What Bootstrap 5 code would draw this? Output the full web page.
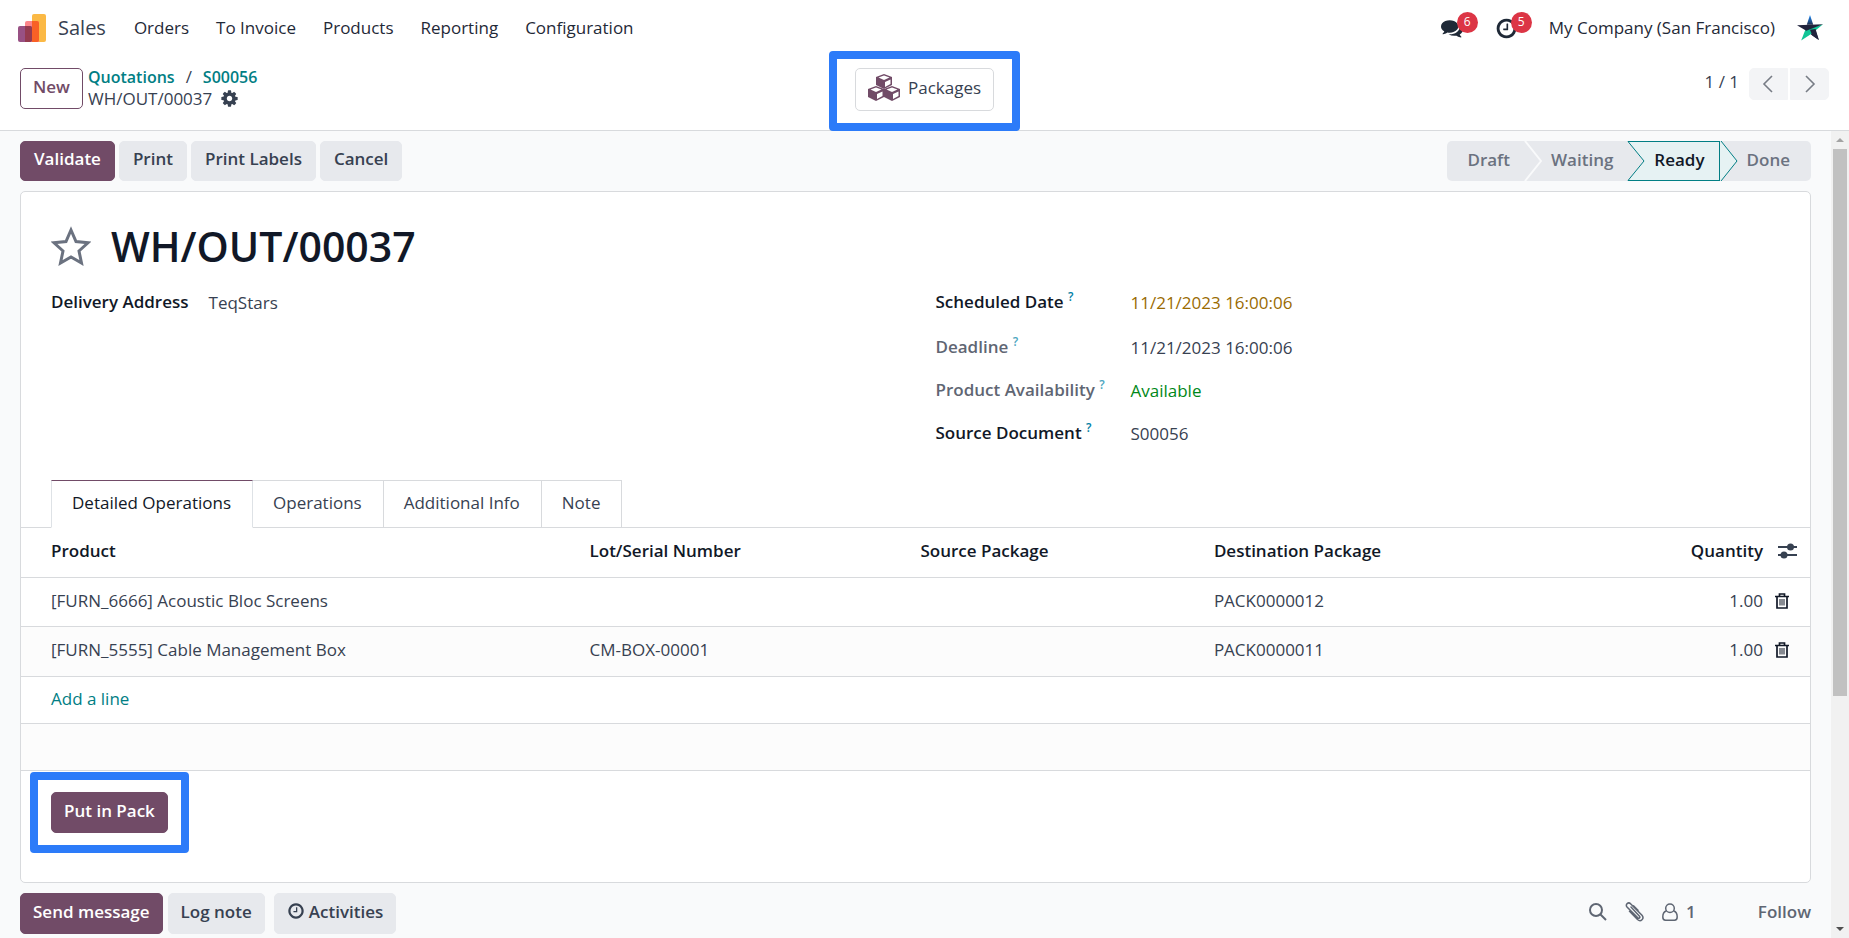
<!DOCTYPE html>
<html lang="en">
<head>
<meta charset="utf-8">
<meta name="viewport" content="width=device-width, initial-scale=1">
<title>WH/OUT/00037 - Sales</title>
<link rel="stylesheet" href="https://cdn.jsdelivr.net/npm/bootstrap@5.3.0/dist/css/bootstrap.min.css">
<style>
:root{--plum:#714b67;--teal:#017e84;--line:#d8dadd;--ink:#111827;--text:#374151;--soft:#e7e9ed;--mark:#2c7bf9}
body{font-family:"Open Sans","Noto Sans",sans-serif;font-size:17px;line-height:24px;color:var(--text);background:#fff}
svg{display:block;flex:none}
a{color:var(--teal);text-decoration:none}
sup{font-size:12px;color:#0180a5;top:-7px;font-weight:600}

/* buttons */
.btn{--bs-btn-font-size:17px;--bs-btn-line-height:25px;--bs-btn-font-weight:600;--bs-btn-padding-x:12px;--bs-btn-border-radius:5px;padding-top:5px;padding-bottom:9px;white-space:nowrap}
.btn-plum{--bs-btn-color:#fff;--bs-btn-bg:var(--plum);--bs-btn-border-color:var(--plum);--bs-btn-hover-color:#fff;--bs-btn-hover-bg:#5a3c52}
.btn-soft{--bs-btn-color:var(--text);--bs-btn-bg:var(--soft);--bs-btn-border-color:var(--soft);--bs-btn-hover-bg:#d8dadd}
.btn-line{--bs-btn-color:var(--plum);--bs-btn-bg:#fff;--bs-btn-border-color:var(--plum)}
.btn-stat{--bs-btn-color:var(--text);--bs-btn-bg:#fff;--bs-btn-border-color:var(--line);--bs-btn-font-weight:400}
.btn-page{--bs-btn-bg:#f3f4f6;--bs-btn-border-color:#f3f4f6;--bs-btn-color:#777c85;padding:6px 10px;width:39px;height:32px}
.icon-btn{display:block;border:0;background:none;padding:0;color:inherit}

/* top bar */
.topbar{height:56px;padding:0 26px 0 18px}
.topbar a{color:#1f2937}
.brand-name{font-size:20px}
.topbar a .brand-name{color:var(--text)}
.menu-links{gap:27px}
.tray{gap:30px}
.tray-item{width:24px}
.user-menu{gap:22px}
.count-dot{left:16px;top:-5px;width:21px;height:21px;font-size:12px;line-height:20px;background:#dc3545}

/* control panel */
.panel{height:75px;padding:12px 20px;border-bottom:1px solid var(--line)}
.panel-side{flex:1 1 0}
.crumbs{line-height:21px;margin:-2px 0 0 5px}
.crumbs a{font-size:16px;font-weight:600}
.crumbs .slash{margin:0 11px}
.pager{gap:10px;height:32px;line-height:28px}
.pager-btns{gap:2px}

/* highlight frames drawn around a control */
.framed{position:relative;width:max-content}
.framed::after{content:"";position:absolute;inset:-20px -21px;border:8px solid var(--mark);border-radius:4px;pointer-events:none}
.framed.stat::after{inset:-17px -26px -20px}

/* form */
.work{background:#f9fafb}
.work main{padding:0 20px;min-width:0}
.actions{padding:10px 0}
.actions .btn{--bs-btn-line-height:24px;--bs-btn-padding-x:13px}
.btn-set{gap:4px}
.stage{height:40px;color:#6b7280;background:var(--soft);border-radius:5px}
.stage button{border:0;background:none;color:inherit;font-weight:600;padding:0 14px 2px 9px;line-height:24px}
.stage button:first-child{padding-left:20px}
.stage button:last-child{padding-right:21px}
.stage .now{background:#e6f2f3;border:1px solid var(--teal);border-left:0;color:var(--ink)}
.sheet{background:#fff;border:1px solid var(--line);border-radius:5px}
.title-row{padding:30px 30px 20px;gap:20px}
h1{font-size:41px;line-height:48px;font-weight:600;color:var(--ink)}
.pair{column-gap:40px;display:grid;grid-template-columns:1fr 1fr;padding:0 30px;min-height:190px}
.fields{display:grid;align-content:start;column-gap:20px;row-gap:18px}
.fields dt{font-weight:600;color:var(--ink)}
.fields dt:first-child{padding-bottom:3px}
.fields dt.faint{color:#5f6673}
.fields dd{margin:0;padding-top:1px}
.warn{color:#9a6b01}
.avail{color:#008818}
.left-fields{grid-template-columns:max-content 1fr}
.right-fields{grid-template-columns:175px 1fr}
.faint sup{color:#4ba6c0}

/* notebook */
.nav-tabs{--bs-nav-tabs-border-color:var(--line);padding:0 30px}
.nav-tabs .nav-link{border:1px solid var(--line);border-left-width:0;border-radius:0;color:var(--text);padding:10px 21px 12px 20px;height:48px;margin-bottom:-1px}
.nav-tabs .nav-link.active{border-left-width:1px;border-top-color:var(--plum);border-bottom-color:#fff;color:var(--ink)}
.lines{table-layout:fixed;--bs-table-bg:transparent;margin:0;color:var(--text)}
.lines th{font-weight:600;color:var(--ink)}
.lines th,.lines td{padding:11px 5px 13px;height:49px;border-bottom:1px solid var(--line);vertical-align:middle}
.lines .stripe td{height:50px}
.lines .low td{padding:10px 5px 12px;height:47px}
.lines tr>:first-child,.lines .low>:first-child{padding-left:30px}
.lines td:nth-child(6){padding-left:7px}
.lines th:nth-child(6){padding-left:10px}
.lines .stripe{background:#fcfcfc}
.c-prod{width:31.5%}.c-lot{width:18.5%}.c-pack{width:16.4%}.c-tool{width:42px}
.pack-area{padding:21px 30px 49px}

/* chatter */
.chatter{padding-top:10px;gap:5px;color:#5f6673;font-weight:600}
.chatter .aside{gap:18px;padding-bottom:3px}
.chatter .link{color:inherit;margin-left:44px}

/* scroll rail */
.rail{width:18px;background:#f1f1f1}
.rail svg{margin:7px 0}
.rail-body{flex:1;width:14px}
.thumb{height:71%;background:#c1c1c1}
</style>
</head>
<body class="vh-100 d-flex flex-column overflow-hidden">
<nav class="topbar d-flex align-items-center flex-shrink-0">
  <a href="#" class="d-flex align-items-center gap-2">
    <svg width="28" height="28" viewBox="0 0 28 28"><rect x="14" width="14" height="28" rx="2" fill="#fbb945"/><path d="M7 9a2 2 0 0 1 2-2h10a2 2 0 0 1 2 2v19H7z" fill="#fc868b"/><path d="M14 7h5a2 2 0 0 1 2 2v17a2 2 0 0 1-2 2h-5z" fill="#f86126"/><rect y="12" width="14" height="16" rx="2" fill="#985184"/><path d="M7 12h5a2 2 0 0 1 2 2v12a2 2 0 0 1-2 2H7z" fill="#953b50"/></svg>
    <span class="brand-name ms-1">Sales</span>
  </a>
  <div class="menu-links d-flex ms-4 ps-1">
    <a href="#">Orders</a><a href="#">To Invoice</a><a href="#">Products</a><a href="#">Reporting</a><a href="#">Configuration</a>
  </div>
  <div class="tray d-flex align-items-center ms-auto">
    <a href="#" class="tray-item position-relative" aria-label="Messages">
      <svg width="22" height="22" viewBox="0 0 1792 1792" fill="#1f2937"><path d="M1408 768q0 139-94 257t-256.500 186.500-353.500 68.500q-86 0-176-16-124 88-278 128-36 9-86 16h-3q-11 0-20.500-8t-11.500-21q-1-3-1-6.500t.5-6.500 2-6l2.500-5 3.500-5.500 4-5 4.500-5 4-4.500q5-6 23-25t26-29.500 22.500-29 25-38.500 20.500-44q-124-72-195-177t-71-224q0-139 94-257t256.500-186.500 353.500-68.500 353.500 68.500 256.500 186.500 94 257zm384 256q0 120-71 224.500t-195 176.500q10 24 20.500 44t25 38.500 22.500 29 26 29.500 23 25q1 1 4 4.500t4.500 5 4 5 3.500 5.500l2.500 5 2 6 .5 6.500-1 6.500q-3 14-13 22t-22 7q-50-7-86-16-154-40-278-128-90 16-176 16-271 0-472-132 58 4 88 4 161 0 309-45t264-129q125-92 192-212t67-254q0-77-23-152 129 71 204 178t75 230z"/></svg>
      <span class="count-dot position-absolute rounded-circle text-white text-center">6</span>
    </a>
    <a href="#" class="tray-item position-relative" aria-label="Activities">
      <svg width="23" height="23" viewBox="0 0 1792 1792" fill="#1f2937"><path d="M1024 544v448q0 14-9 23t-23 9h-320q-14 0-23-9t-9-23v-64q0-14 9-23t23-9h224v-352q0-14 9-23t23-9h64q14 0 23 9t9 23zm416 352q0-148-73-273t-198-198-273-73-273 73-198 198-73 273 73 273 198 198 273 73 273-73 198-198 73-273zm224 0q0 209-103 385.500t-279.500 279.500-385.500 103-385.500-103-279.500-279.500-103-385.500 103-385.500 279.500-279.500 385.500-103 385.500 103 279.500 279.500 103 385.500z"/></svg>
      <span class="count-dot position-absolute rounded-circle text-white text-center">5</span>
    </a>
    <a href="#" class="user-menu d-flex align-items-center">My Company (San Francisco)
      <svg width="26" height="26" viewBox="0 0 28 28"><defs><linearGradient id="sa" x1="0" y1="0" x2="0" y2="1"><stop offset="0" stop-color="#1a8cff"/><stop offset="1" stop-color="#22304f"/></linearGradient></defs><path d="M14 0l3.500 10.500h-7z" fill="url(#sa)"/><path d="M14 15l5-1 4.500 13-8.500-6z" fill="#20233c"/><path d="M28 10l-19 6-4.500 11.500L16 20z" fill="#10c596"/><path d="M14 16l6-1 3.500 12-7-5z" fill="#20233c"/><path d="M0 11l28-1-18 7z" fill="#20233c"/></svg>
    </a>
  </div>
</nav>
<div class="panel d-flex flex-shrink-0 align-items-start">
  <div class="panel-side d-flex align-items-start">
    <button class="btn btn-line">New</button>
    <div class="crumbs">
      <div><a href="#">Quotations</a><span class="slash">/</span><a href="#">S00056</a></div>
      <div class="d-flex align-items-center gap-2">WH/OUT/00037
        <button class="icon-btn" aria-label="Actions"><svg width="19" height="19" viewBox="0 0 1792 1792" fill="#374151"><path d="M1152 896q0-106-75-181t-181-75-181 75-75 181 75 181 181 75 181-75 75-181zm512-109v222q0 12-8 23t-20 13l-185 28q-19 54-39 91 35 50 107 138 10 12 10 25t-9 23q-27 37-99 108t-94 71q-12 0-26-9l-138-108q-44 23-91 38-16 136-29 186-7 28-36 28h-222q-14 0-24.500-8.500t-11.500-21.500l-28-184q-49-16-90-37l-141 107q-10 9-25 9-14 0-25-11-126-114-165-168-7-10-7-23 0-12 8-23 15-21 51-66.500t54-70.500q-27-50-41-99l-183-27q-13-2-21-12.500t-8-23.500v-222q0-12 8-23t19-13l186-28q14-46 39-92-40-57-107-138-10-12-10-24 0-10 9-23 26-36 98.500-107.500t94.500-71.500q13 0 26 10l138 107q44-23 91-38 16-136 29-186 7-28 36-28h222q14 0 24.500 8.500t11.500 21.500l28 184q49 16 90 37l142-107q9-9 24-9 13 0 25 10 129 119 165 170 7 8 7 22 0 12-8 23-15 21-51 66.500t-54 70.500q26 50 41 98l183 28q13 2 21 12.500t8 23.500z"/></svg></button>
      </div>
    </div>
  </div>
  <div class="framed stat">
    <button class="btn btn-stat d-flex align-items-center gap-2">
      <svg width="32" height="27" viewBox="0 0 32 27"><g id="cube"><path d="M16 0l8 3v8l-8 4-8-4V3z" fill="#714b67"/><path d="M16 1.500l5.500 2L16 6l-5.500-2.500zM17 8l5.500-2.500v4.500L17 13z" fill="#fff"/></g><use href="#cube" x="-8" y="12"/><use href="#cube" x="8" y="12"/></svg>
      Packages
    </button>
  </div>
  <div class="panel-side pager d-flex justify-content-end">
    <span>1 / 1</span>
    <div class="pager-btns d-flex">
      <button class="btn btn-page rounded-end-0" aria-label="Previous"><svg width="17" height="18" viewBox="0 0 17 18" fill="none" stroke="currentColor" stroke-width="1.600"><path d="M12 1L4 9l8 8"/></svg></button>
      <button class="btn btn-page rounded-start-0" aria-label="Next"><svg width="17" height="18" viewBox="0 0 17 18" fill="none" stroke="currentColor" stroke-width="1.600"><path d="M5 1l8 8-8 8"/></svg></button>
    </div>
  </div>
</div>
<div class="work d-flex flex-fill overflow-hidden">
  <main class="flex-fill">
    <div class="actions d-flex justify-content-between">
      <div class="btn-set d-flex">
        <button class="btn btn-plum">Validate</button><button class="btn btn-soft">Print</button><button class="btn btn-soft">Print Labels</button><button class="btn btn-soft">Cancel</button>
      </div>
      <div class="stage d-flex">
        <button>Draft</button>
        <svg width="18" height="40" viewBox="0 0 18 40" fill="none" stroke="#f9fafb" stroke-width="2"><path d="M1 0l16 20L1 40"/></svg>
        <button>Waiting</button>
        <svg width="18" height="40" viewBox="0 0 18 40"><path d="M1 0h17v40H1l16-20z" fill="#e6f2f3"/><path d="M18 .5H1L17 20 1 39.500h17" fill="none" stroke="#017e84"/></svg>
        <button class="now">Ready</button>
        <svg width="18" height="40" viewBox="0 0 18 40"><path d="M1 0l16 20L1 40H0V0z" fill="#e6f2f3"/><path d="M1 0l16 20L1 40" fill="none" stroke="#017e84"/></svg>
        <button>Done</button>
      </div>
    </div>
    <section class="sheet">
      <div class="title-row d-flex align-items-center">
        <button class="icon-btn" aria-label="Priority"><svg width="40" height="40" viewBox="0 0 40 40" fill="none" stroke="#6b7280" stroke-width="3"><path d="M20 4l5 11.500 12 1.300-9 8.200 2.500 12L20 31 9.500 37 12 25l-9-8.200 12-1.300z"/></svg></button>
        <h1 class="mb-0">WH/OUT/00037</h1>
      </div>
      <div class="pair">
        <dl class="fields left-fields mb-0"><dt>Delivery Address</dt><dd>TeqStars</dd></dl>
        <dl class="fields right-fields mb-0">
          <dt>Scheduled Date <sup>?</sup></dt><dd class="warn">11/21/2023 16:00:06</dd>
          <dt class="faint">Deadline <sup>?</sup></dt><dd>11/21/2023 16:00:06</dd>
          <dt class="faint">Product Availability <sup>?</sup></dt><dd class="avail">Available</dd>
          <dt>Source Document <sup>?</sup></dt><dd>S00056</dd>
        </dl>
      </div>
      <ul class="nav nav-tabs">
        <li class="nav-item"><a class="nav-link active" href="#">Detailed Operations</a></li>
        <li class="nav-item"><a class="nav-link" href="#">Operations</a></li>
        <li class="nav-item"><a class="nav-link" href="#">Additional Info</a></li>
        <li class="nav-item"><a class="nav-link" href="#">Note</a></li>
      </ul>
      <table class="table lines">
        <colgroup><col class="c-prod"><col class="c-lot"><col class="c-pack"><col class="c-pack"><col><col class="c-tool"></colgroup>
        <thead><tr><th>Product</th><th>Lot/Serial Number</th><th>Source Package</th><th>Destination Package</th><th class="text-end">Quantity</th>
          <th><button class="icon-btn" aria-label="Columns"><svg width="19" height="16" viewBox="0 0 19 16" fill="#374151"><path d="M0 3h19v2H0zM0 11h19v2H0z"/><circle cx="12.500" cy="4" r="3.500"/><circle cx="6" cy="12" r="3.500"/></svg></button></th></tr></thead>
        <tbody>
          <tr><td>[FURN_6666] Acoustic Bloc Screens</td><td></td><td></td><td>PACK0000012</td><td class="text-end">1.00</td><td><button class="icon-btn" aria-label="Delete"><svg width="14" height="16" viewBox="0 0 14 16"><g id="bin" fill="none" stroke="#111827"><path d="M0 3.500h14M4.500 3V1h5v2M2 4v11h10V4" stroke-width="1.700"/><path d="M5 6v6.500M7 6v6.500M9 6v6.500"/></g></svg></button></td></tr>
          <tr class="stripe"><td>[FURN_5555] Cable Management Box</td><td>CM-BOX-00001</td><td></td><td>PACK0000011</td><td class="text-end">1.00</td><td><button class="icon-btn" aria-label="Delete"><svg width="14" height="16" viewBox="0 0 14 16"><use href="#bin"/></svg></button></td></tr>
          <tr class="low"><td colspan="6"><a href="#">Add a line</a></td></tr>
          <tr class="stripe low"><td colspan="6"></td></tr>
        </tbody>
      </table>
      <div class="pack-area"><div class="framed"><button class="btn btn-plum">Put in Pack</button></div></div>
    </section>
    <div class="chatter d-flex align-items-center">
      <button class="btn btn-plum">Send message</button>
      <button class="btn btn-soft">Log note</button>
      <button class="btn btn-soft d-flex align-items-center gap-1 ms-1"><svg width="18" height="18" viewBox="0 0 1792 1792" fill="#374151"><path d="M1024 544v448q0 14-9 23t-23 9h-320q-14 0-23-9t-9-23v-64q0-14 9-23t23-9h224v-352q0-14 9-23t23-9h64q14 0 23 9t9 23zm416 352q0-148-73-273t-198-198-273-73-273 73-198 198-73 273 73 273 198 198 273 73 273-73 198-198 73-273zm224 0q0 209-103 385.500t-279.500 279.500-385.500 103-385.500-103-279.500-279.500-103-385.500 103-385.500 279.500-279.500 385.500-103 385.500 103 279.500 279.500 103 385.500z"/></svg>Activities</button>
      <div class="aside d-flex align-items-center ms-auto">
        <button class="icon-btn" aria-label="Search"><svg width="18" height="18" viewBox="0 0 18 18" fill="none" stroke="currentColor" stroke-width="2"><circle cx="7" cy="7" r="6"/><path d="M11.500 11.500L17 17"/></svg></button>
        <button class="icon-btn" aria-label="Attachments"><svg width="19" height="20" viewBox="0 0 19 20" fill="none" stroke="currentColor" stroke-width="1.500" stroke-linecap="round"><path d="M6 5l8.500 9.300c1 1.200-.6 2.700-1.700 1.600L2 5C-.2 2.400 3.300-.6 5.800 2L17 13.300c2.700 3.300-1.200 7.200-4.500 4.200L4.500 9.200M8.500 3.800l4.500 4.500"/></svg></button>
        <button class="icon-btn d-flex align-items-center gap-2" aria-label="Followers"><svg width="16" height="18" viewBox="0 0 16 18" fill="none" stroke="currentColor" stroke-width="1.500"><circle cx="8" cy="5.200" r="4.300"/><path d="M4.200 8C1.500 8.800.8 11.500.8 14c0 2 1 3.200 2.700 3.200h9c1.700 0 2.700-1.200 2.700-3.200 0-2.500-.7-5.200-3.400-6"/></svg><span class="fw-semibold">1</span></button>
        <a href="#" class="link">Follow</a>
      </div>
    </div>
  </main>
  <div class="rail d-flex flex-column align-items-center flex-shrink-0">
    <svg width="8" height="4" viewBox="0 0 8 4"><path d="M0 4l4-4 4 4z" fill="#a3a3a3"/></svg>
    <div class="rail-body"><div class="thumb"></div></div>
    <svg width="8" height="4" viewBox="0 0 8 4"><path d="M0 0l4 4 4-4z" fill="#505050"/></svg>
  </div>
</div>
<script src="https://cdn.jsdelivr.net/npm/bootstrap@5.3.0/dist/js/bootstrap.bundle.min.js"></script>
</body>
</html>
